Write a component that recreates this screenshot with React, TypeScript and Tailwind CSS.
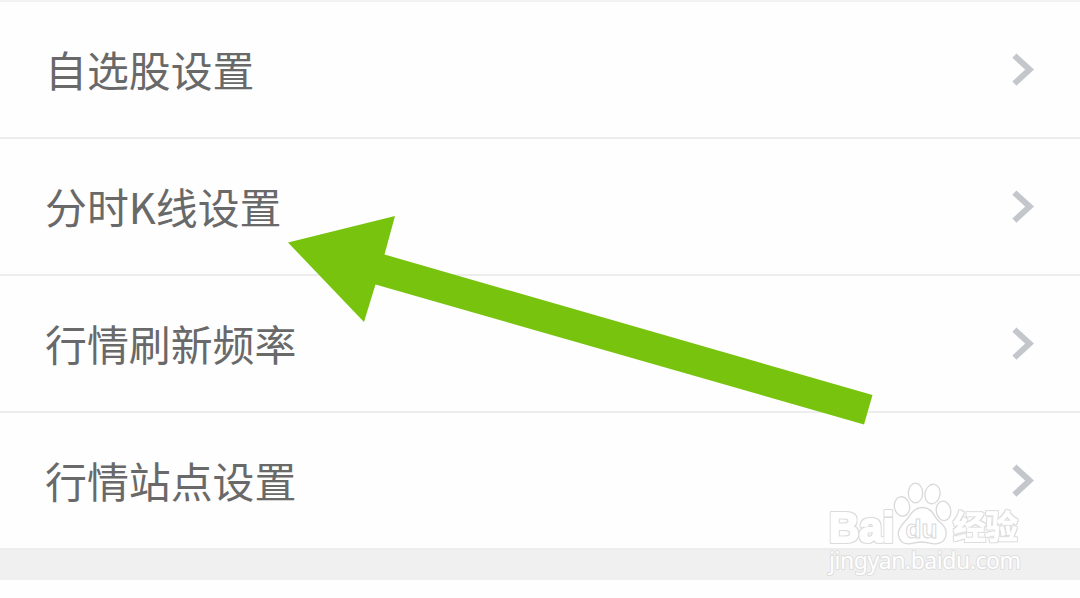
import React from 'react';

const settings = ['自选股设置', '分时K线设置', '行情刷新频率', '行情站点设置'];

const Chevron: React.FC = () => (
  <svg className="h-9 w-6 shrink-0" viewBox="0 0 24 36" fill="none" stroke="#c3c6cb" strokeWidth="6">
    <path d="M3.4 3.6 L18.6 17.6 L3.4 31.600" />
  </svg>
);

const SettingRow: React.FC<{ label: string }> = ({ label }) => (
  <div className="flex h-[137px] items-center justify-between border-b-2 border-[#ededed] pl-[45px] pr-[45px]">
    <span className="pb-px text-[41.900px] leading-[42px] text-[#696969]">{label}</span>
    <Chevron />
  </div>
);

const Arrow: React.FC = () => (
  <svg className="absolute left-0 top-0 h-[598px] w-[1080px]" viewBox="0 0 1080 598">
    <polygon points="288,242.500 395,216 384.500,254.500 872.500,395 864,424.500 375.500,284.500 364,322" fill="#77c30d" />
  </svg>
);

const Watermark: React.FC = () => (
  <svg className="absolute left-[815px] top-[470px] h-[128px] w-[265px]" viewBox="815 470 265 128">
    {/* White letters with a thin grey rim */}
    <defs>
      <filter id="rim" x="-5%" y="-15%" width="110%" height="130%">
        <feMorphology in="SourceAlpha" operator="dilate" radius="1" result="grown" />
        <feFlood floodColor="#dcdcdc" />
        <feComposite in2="grown" operator="in" result="edge" />
        <feMerge>
          <feMergeNode in="edge" />
          <feMergeNode in="SourceGraphic" />
        </feMerge>
      </filter>
    </defs>
    <g filter="url(#rim)" fill="#ffffff" stroke="#ffffff" strokeWidth="2" strokeLinejoin="round" fontWeight="bold">
      <text x="829" y="541.500" fontSize="42" textLength="65" lengthAdjust="spacingAndGlyphs" fontFamily="'Liberation Sans', sans-serif">Bai</text>
      <text x="953" y="539" fontSize="33" textLength="65" strokeWidth="0.6" fontFamily="'Noto Sans CJK SC', sans-serif">经验</text>
    </g>
    <g fill="#ffffff" stroke="#d9d9d9" strokeWidth="1.3">
      <ellipse cx="902" cy="506.500" rx="7.600" ry="9.800" transform="rotate(-10 902 506.500)" />
      <ellipse cx="915.500" cy="493" rx="7.200" ry="9.800" />
      <ellipse cx="932.500" cy="494" rx="7.500" ry="9.800" transform="rotate(12 932.500 494)" />
      <ellipse cx="943.500" cy="510.800" rx="7.200" ry="9.800" transform="rotate(-8 943.500 510.800)" />
      <path d="M922 507.500 C915 507.500 911 513 908 518 C904 523 898 527 898.300 534 C899 541 903 544 909 543.800 C914 543 917 542 922 542 C927 542 930 544 936 543.800 C943 543 947 539 946 531 C945 525 940 523 936 518 C932 511 929 507.500 922 507.500 Z" />
      <text x="905.500" y="538" fontSize="26" fontWeight="bold" textLength="32" strokeWidth="1" lengthAdjust="spacingAndGlyphs" fontFamily="'Liberation Sans', sans-serif">du</text>
    </g>
    <text x="829" y="569" fontSize="23" textLength="192" fill="#ffffff" stroke="#dedede" strokeWidth="2" strokeLinejoin="round" paintOrder="stroke" fontFamily="'Noto Sans', sans-serif">jingyan.baidu.com</text>
  </svg>
);

const App: React.FC = () => (
  <div className="relative h-[598px] w-[1080px] overflow-hidden bg-[#fefefe] font-['Noto_Sans_CJK_SC',sans-serif]">
    <div className="h-0.5 bg-[#f2f2f2]" />
    {settings.map((label) => (
      <SettingRow key={label} label={label} />
    ))}
    {/* Section gap below the list */}
    <div className="h-[30px] bg-[#f0f0f0]" />
    <Arrow />
    <Watermark />
  </div>
);

export default App;
